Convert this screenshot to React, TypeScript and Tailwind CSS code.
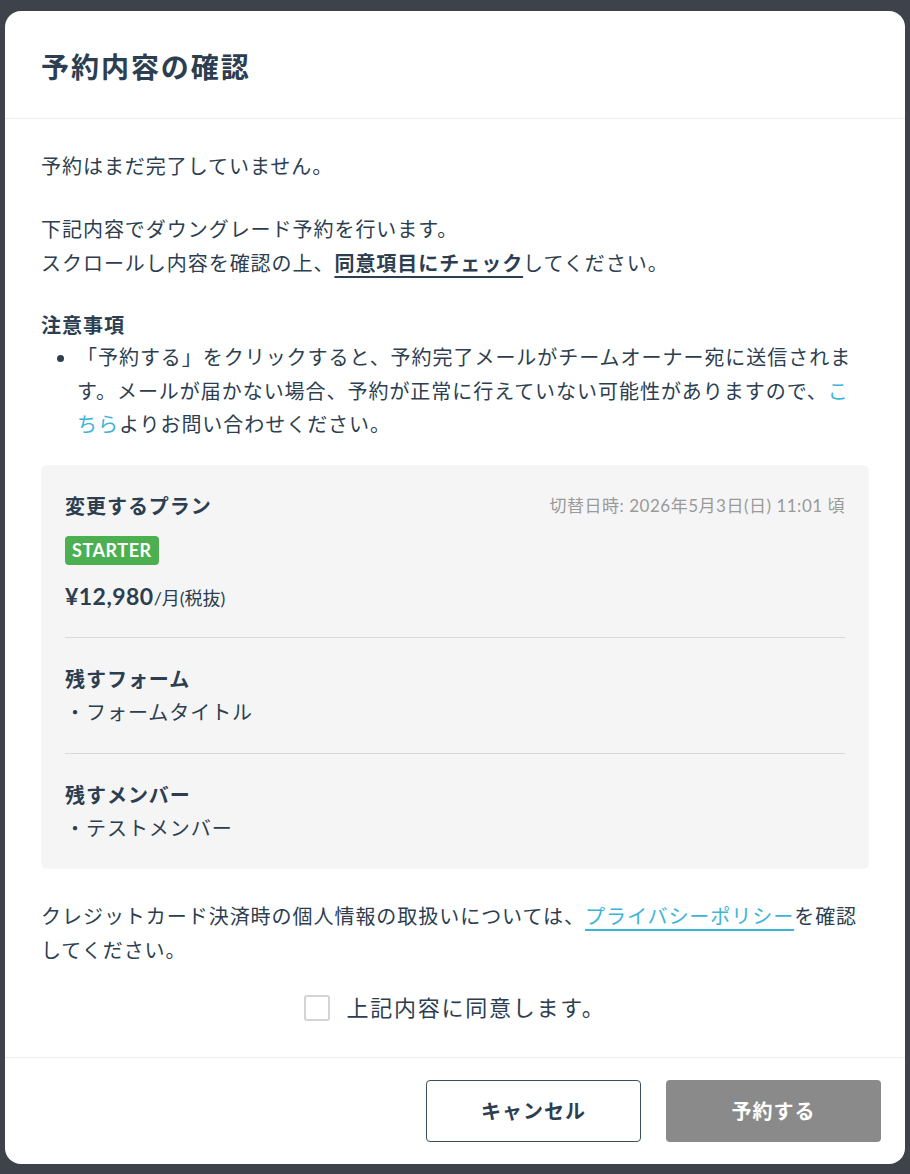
import { useState } from "react";

const font = {
  fontFamily: 'Lato, "Noto Sans CJK JP", sans-serif',
};

function PlanSection({ title, items }: { title: string; items: string[] }) {
  return (
    <div className="border-t border-[#d9d9d9] py-6">
      <p className="text-[20px] font-bold leading-[34px]">{title}</p>
      {items.map((item, index) => (
        <p key={index} className="text-[20px] leading-[33px]">
          ・{item}
        </p>
      ))}
    </div>
  );
}

export default function App() {
  const [agreed, setAgreed] = useState(false);

  return (
    <div
      className="min-h-[1174px] bg-[#3e434b] pt-[11px] tracking-[0.06em] text-[#2c3e50]"
      style={font}
    >
      <div className="mx-auto flex w-[900px] flex-col rounded-2xl bg-white">
        <div className="flex h-[108px] items-center border-b border-[#eeeeee] px-9 pt-1">
          <h1 className="text-[28px] font-bold leading-none tracking-[0.07em]">予約内容の確認</h1>
        </div>

        <div className="px-9 pt-[30px] pb-8 text-[20px] leading-[34px]">
          <p>予約はまだ完了していません。</p>
          <p className="mt-[29px]">
            下記内容でダウングレード予約を行います。
            <br />
            スクロールし内容を確認の上、
            <span className="font-bold underline decoration-2 underline-offset-[5px]">同意項目にチェック</span>
            してください。
          </p>

          <p className="mt-[29px] font-bold leading-[32px]">注意事項</p>
          <ul className="list-disc pl-9 leading-[33.5px]">
            <li>
              「予約する」をクリックすると、予約完了メールがチームオーナー宛に送信されます。メールが届かない場合、予約が正常に行えていない可能性がありますので、
              <a className="text-[#3cb4d8]">こちら</a>
              よりお問い合わせください。
            </li>
          </ul>

          <div className="mt-[23px] rounded-md bg-[#f5f5f5] px-6">
            <div className="pt-6 pb-6">
              <div className="flex items-center justify-between">
                <p className="font-bold leading-[34px]">変更するプラン</p>
                <p className="text-[17px] tracking-[0.03em] text-[#9a9a9a]">
                  切替日時: 2026年5月3日(日) 11:01 頃
                </p>
              </div>
              <span className="mt-[13px] flex h-[29px] w-fit items-center rounded bg-[#4caf50] px-[7px] text-[18px] font-bold leading-none tracking-[0.03em] text-white">
                STARTER
              </span>
              <p className="mt-[14px] flex h-[34px] items-baseline pt-[2px]">
                <span className="text-[23px] font-bold leading-[30px] tracking-[0.02em]">¥12,980</span>
                <span className="text-[18px] leading-[30px] tracking-normal">/月(税抜)</span>
              </p>
            </div>
            <PlanSection title="残すフォーム" items={["フォームタイトル"]} />
            <PlanSection title="残すメンバー" items={["テストメンバー"]} />
          </div>

          <p className="mt-[30px]">
            クレジットカード決済時の個人情報の取扱いについては、
            <a className="text-[#3cb4d8] underline decoration-2 underline-offset-[5px]">プライバシーポリシー</a>
            を確認してください。
          </p>

          <label className="mt-6 flex cursor-pointer items-center justify-center gap-4">
            <span
              onClick={() => setAgreed(!agreed)}
              className="h-[26px] w-[26px] rounded-[3px] border-2 border-[#d4d4d4] bg-white"
            />
            <span className="text-[22px] leading-[34px] tracking-[0.08em]">上記内容に同意します。</span>
          </label>
        </div>

        <div className="flex justify-end gap-[25px] border-t border-[#eeeeee] px-6 pt-[22px] pb-[22px]">
          <button className="h-[62px] w-[215px] rounded border border-[#3c4f5c] bg-white text-[20px] font-bold text-[#2c3e50]">
            キャンセル
          </button>
          <button className="h-[62px] w-[215px] rounded bg-[#8a8a8a] text-[20px] font-bold text-white">
            予約する
          </button>
        </div>
      </div>
    </div>
  );
}
